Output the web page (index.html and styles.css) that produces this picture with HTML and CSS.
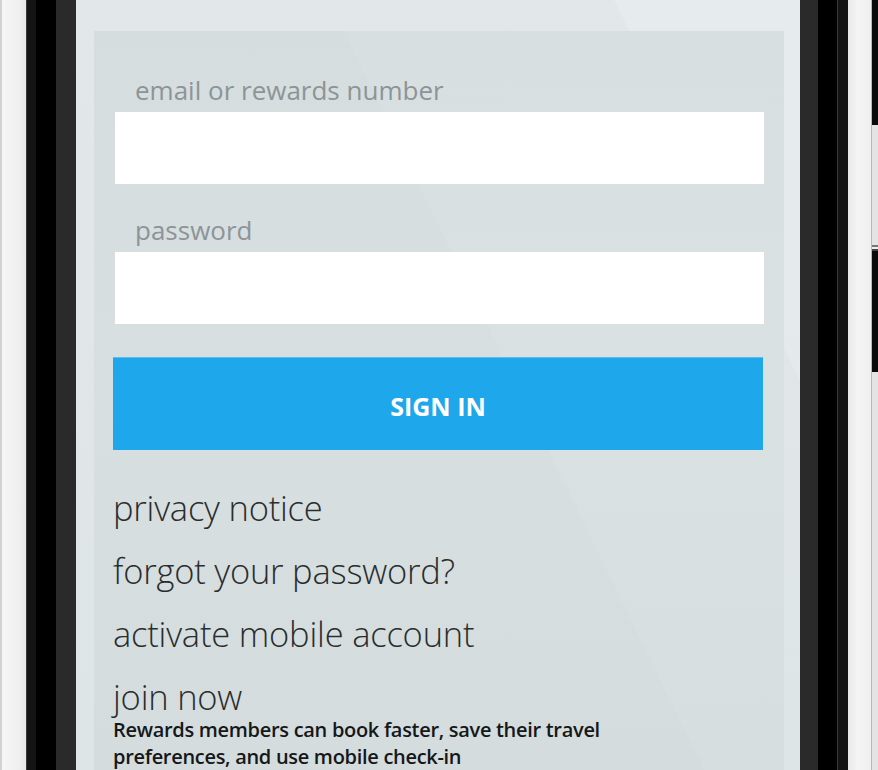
FILE: index.html
```html
<!DOCTYPE html>
<html lang="en">
<head>
<meta charset="utf-8">
<title>Sign in</title>
<link rel="stylesheet" href="styles.css">
</head>
<body>
<div class="device">
  <div class="bezel-left">
    <div class="edge-shade"></div>
    <div class="edge-white"></div>
    <div class="edge-line"></div>
    <div class="edge-dark"></div>
    <div class="edge-black"></div>
    <div class="edge-grey"></div>
  </div>
  <main class="screen">
    <section class="panel">
      <form class="signin">
        <label class="field-label" for="user">email or rewards number</label>
        <input class="field" id="user" type="text">
        <label class="field-label" for="pass">password</label>
        <input class="field" id="pass" type="password">
        <button class="btn-signin" type="button">SIGN IN</button>
      </form>
      <nav class="links">
        <a class="link" href="#">privacy notice</a>
        <a class="link" href="#">forgot your password?</a>
        <a class="link" href="#">activate mobile account</a>
        <a class="link link-join" href="#">join now</a>
      </nav>
      <p class="join-note">Rewards members can book faster, save their travel preferences, and use mobile check-in</p>
    </section>
  </main>
  <div class="bezel-right">
    <div class="edge-grey"></div>
    <div class="edge-black"></div>
    <div class="edge-line"></div>
    <div class="edge-dark r"></div>
    <div class="edge-white"></div>
    <div class="edge-line light"></div>
    <div class="side-buttons">
      <div class="sb-black sb-top"></div>
      <div class="sb-light sb-gap"></div>
      <div class="sb-mark"></div>
      <div class="sb-black sb-mid"></div>
      <div class="sb-light sb-rest"></div>
    </div>
  </div>
</div>
</body>
</html>
```
FILE: styles.css
```css
* { box-sizing: border-box; }
html, body { margin: 0; padding: 0; }
body {
  width: 878px;
  height: 770px;
  overflow: hidden;
  background: #f2f2f2;
  font-family: "Open Sans", "Noto Sans", sans-serif;
}
.device {
  display: flex;
  height: 770px;
  width: 878px;
}
.bezel-left, .bezel-right {
  display: flex;
  height: 100%;
}
.edge-shade { width: 2px; background: #d2d2d2; }
.edge-white { width: 24px; background: linear-gradient(90deg, #f6f6f6, #efefef 70%, #e6e6e6); }
.edge-line { width: 1px; background: #3a3a3a; }
.edge-line.light { background: #b8b8b8; }
.edge-dark { width: 9px; background: #141414; }
.edge-dark.r { width: 10px; }
.edge-black { width: 20px; background: #000; }
.edge-grey { width: 20px; background: #2a2a2a; }
.bezel-right .edge-grey { width: 18px; }
.bezel-right .edge-black { width: 19px; }
.bezel-right .edge-white { width: 23px; background: linear-gradient(90deg, #e9e9e9, #f4f4f4 40%, #f0f0f0); }

.side-buttons { width: 6px; display: flex; flex-direction: column; }
.sb-black { background: #0a0a0a; }
.sb-light { background: #e4e4e4; }
.sb-top { height: 125px; }
.sb-gap { height: 120px; }
.sb-mark { height: 6px; background: linear-gradient(#777 0 2px, #eee 2px 4px, #444 4px); }
.sb-mid { height: 121px; }
.sb-rest { flex: 1; }

.screen {
  width: 724px;
  height: 100%;
  display: flex;
  flex-direction: column;
  padding: 31px 16px 0 18px;
  background:
    linear-gradient(64deg, rgba(255,255,255,0) 0 83%, rgba(255,255,255,0.14) 83.2% 100%),
    linear-gradient(180deg, #e2e8ea, #e0e6e8 60%, #dee5e7);
}
.panel {
  flex: 1;
  display: flex;
  flex-direction: column;
  padding: 0 20px 0 19px;
  background:
    linear-gradient(64deg, rgba(255,255,255,0) 0 58%, rgba(255,255,255,0.07) 58.2% 100%),
    linear-gradient(180deg, #d5dddf, #d7dfe1 50%, #d4dcde);
}
.signin {
  display: flex;
  flex-direction: column;
}
.field-label {
  display: block;
  font-size: 26px;
  line-height: 34px;
  color: #8d9497;
  padding-left: 22px;
  margin-top: 42px;
  margin-bottom: 5px;
}
.field {
  display: block;
  height: 72px;
  margin: 0 0 0 2px;
  border: 0;
  background: #fff;
  outline: none;
}
.signin .field-label:nth-of-type(2) { margin-top: 29px; }
.btn-signin {
  margin: 33px 1px 0 0;
  height: 93px;
  border: 0;
  background: #1fa7ec;
  box-shadow: inset 0 1px 0 rgba(255,255,255,0.25);
  color: #fff;
  font-family: "Open Sans", sans-serif;
  font-weight: 700;
  font-size: 25px;
  padding: 4px 0 0;
}
.links {
  display: flex;
  flex-direction: column;
  margin-top: 26px;
}
.link {
  font-size: 34.5px;
  font-weight: 300;
  line-height: 63px;
  color: #2a2d2e;
  text-decoration: none;
  letter-spacing: -0.2px;
}
.link-join { margin-bottom: -12px; }
.join-note {
  margin: 0;
  font-size: 20px;
  font-weight: 600;
  line-height: 27px;
  color: #151718;
  letter-spacing: -0.3px;
  max-width: 500px;
}
```
